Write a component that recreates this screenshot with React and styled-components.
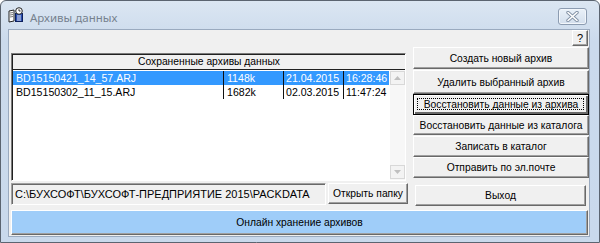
import React from 'react';
import styled, { createGlobalStyle, css } from 'styled-components';

const GlobalStyle = createGlobalStyle`
  html, body {
    margin: 0;
    padding: 0;
    background: #ffffff;
  }
  body {
    font-family: 'Liberation Sans', Arial, sans-serif;
    font-size: 10.3px;
    color: #000;
  }
`;

const Window = styled.div`
  width: 600px;
  height: 243px;
  box-sizing: border-box;
  border: 1px solid #5b6470;
  border-radius: 6px 6px 0 0;
  background: linear-gradient(#dbe6f2, #cbdaec 40px, #c9d9ec);
  display: flex;
  flex-direction: column;
  overflow: hidden;
`;

const TitleBar = styled.div`
  height: 28px;
  display: flex;
  align-items: center;
  padding-left: 7px;
  flex-shrink: 0;
`;

const Title = styled.span`
  margin-left: 6px;
  font-family: 'Noto Sans', 'DejaVu Sans', sans-serif;
  font-size: 11.5px;
  color: #76818e;
  margin-top: 4px;
`;

const CloseButton = styled.div`
  margin-left: auto;
  margin-right: 12px;
  margin-top: 2px;
  width: 27px;
  height: 15px;
  border: 1px solid #8c9cb1;
  border-radius: 3px;
  background: linear-gradient(#eaf1f9, #d3dfed);
  box-shadow: inset 0 0 0 1px #f2f6fb;
  display: flex;
  align-items: center;
  justify-content: center;
`;

const Client = styled.div`
  flex: 1;
  margin: 0 9px 6px 7px;
  border: 1px solid #9aaabf;
  background: #f0f0f0;
  padding: 0 1px 1px 2px;
  display: flex;
  flex-direction: column;
`;

const HelpRow = styled.div`
  display: flex;
  justify-content: flex-end;
`;

const raised = css`
  box-sizing: border-box;
  background: #f0f0f0;
  border: 1px solid;
  border-color: #ffffff #696969 #696969 #ffffff;
  box-shadow: inset -1px -1px 0 #a0a0a0;
`;

const HelpButton = styled.div`
  ${raised};
  width: 16px;
  height: 16px;
  display: flex;
  align-items: center;
  justify-content: center;
  font-size: 11px;
`;

const Main = styled.div`
  display: grid;
  grid-template-columns: 395px 176px;
  column-gap: 7px;
`;

const ListBox = styled.div`
  margin-top: 7px;
  height: 128px;
  box-sizing: border-box;
  border: 1px solid;
  border-color: #7a7a7a #ffffff #ffffff #7a7a7a;
  box-shadow: inset 1px 1px 0 #202020;
  background: #ffffff;
  display: flex;
  flex-direction: column;
`;

const ListHeader = styled.div`
  height: 14px;
  line-height: 13px;
  text-align: center;
  background: #f0f0f0;
  border-bottom: 1px solid #202020;
  margin-left: 1px;
  margin-top: 1px;
`;

const ListBody = styled.div`
  flex: 1;
  display: flex;
`;

const Rows = styled.div`
  flex: 1;
  padding: 1px 0 0 1px;
`;

const Row = styled.div`
  display: flex;
  height: 14px;
  line-height: 14px;
  font-size: 10.6px;
  background: ${p => (p.selected ? '#3399ff' : 'transparent')};
  color: ${p => (p.selected ? '#ffffff' : '#000000')};
  margin-right: 1px;
`;

const Cell = styled.div`
  width: ${p => p.w}px;
  box-sizing: border-box;
  padding-left: ${p => p.pad || 3}px;
  border-right: ${p => (p.last ? 'none' : '1px solid #101010')};
  white-space: nowrap;
  overflow: hidden;
`;

const ScrollBar = styled.div`
  width: 16px;
  display: flex;
  flex-direction: column;
  justify-content: space-between;
  background: #f7f7f7;
  padding: 1px 0;
`;

const ScrollArrow = styled.div`
  height: 14px;
  box-sizing: border-box;
  border: 1px solid #d8d8d8;
  background: #f3f3f3;
  display: flex;
  align-items: center;
  justify-content: center;
`;

const ButtonColumn = styled.div`
  display: flex;
  flex-direction: column;
  padding-top: 1px;
`;

const Button = styled.div`
  ${raised};
  height: ${p => p.h || 22}px;
  margin-top: ${p => p.mt || 0}px;
  display: flex;
  align-items: center;
  justify-content: center;
  white-space: nowrap;
  position: relative;
  ${p =>
    p.focused &&
    css`
      border-color: #000;
      box-shadow: inset 1px 1px 0 #fff, inset -2px -2px 0 #696969;
      &::after {
        content: '';
        position: absolute;
        left: 3px;
        top: 3px;
        right: 4px;
        bottom: 4px;
        border: 1px dotted #000;
      }
    `}
`;

const FooterRow = styled.div`
  display: grid;
  grid-template-columns: 315px 80px 176px;
  column-gap: 2px;
  margin-top: 2px;
  & > :last-child {
    margin-left: 5px;
  }
`;

const PathField = styled.div`
  height: 22px;
  box-sizing: border-box;
  border: 1px solid;
  border-color: #a0a0a0 #ffffff #ffffff #a0a0a0;
  box-shadow: inset 1px 1px 0 #696969;
  padding-left: 3px;
  display: flex;
  align-items: center;
  white-space: nowrap;
  overflow: hidden;
  font-size: 11px;
`;

const OnlineBar = styled.div`
  ${raised};
  margin-top: 4px;
  height: 25px;
  background: #9fcdf9;
  display: flex;
  align-items: center;
  justify-content: center;
`;

const AppIcon = () => (
  <svg width="16" height="16" viewBox="0 0 16 16">
    <path d="M1 4 L6 3 L6 14 L1 15 Z" fill="#fff" stroke="#222" strokeWidth="1" />
    <path d="M2 6 L5 5.5 M2 8 L5 7.5 M2 10 L5 9.5" stroke="#555" strokeWidth="0.8" />
    <rect x="7.5" y="6.5" width="7" height="8" fill="#2a4fb0" stroke="#0d1f5c" />
    <path d="M9 9 H13 M9 11 H13 M9 13 H13" stroke="#fff" strokeWidth="0.9" />
    <circle cx="11" cy="4" r="3.3" fill="#fff" stroke="#222" />
    <path d="M11 2.2 V4 H12.6" stroke="#222" strokeWidth="0.9" fill="none" />
  </svg>
);

const CloseIcon = () => (
  <svg width="13" height="11" viewBox="0 0 13 11">
    <path d="M2 1.5 L11 9.5 M11 1.5 L2 9.5" stroke="#8392a6" strokeWidth="3.4" strokeLinecap="round" />
    <path d="M2 1.5 L11 9.5 M11 1.5 L2 9.5" stroke="#ffffff" strokeWidth="1.6" strokeLinecap="round" />
  </svg>
);

const Arrow = ({ up }) => (
  <svg width="7" height="4" viewBox="0 0 7 4">
    <path d={up ? 'M0 4 L3.5 0 L7 4 Z' : 'M0 0 L3.5 4 L7 0 Z'} fill="#bfbfbf" />
  </svg>
);

const archives = [
  { name: 'BD15150421_14_57.ARJ', size: '1148k', date: '21.04.2015', time: '16:28:46' },
  { name: 'BD15150302_11_15.ARJ', size: '1682k', date: '02.03.2015', time: '11:47:24' },
];

const actions = [
  { label: 'Создать новый архив', h: 22 },
  { label: 'Удалить выбранный архив', h: 24, mt: 1 },
  { label: 'Восстановить данные из архива', h: 21, focused: true },
  { label: 'Восстановить данные из каталога', h: 20 },
  { label: 'Записать в каталог', h: 21, mt: 1 },
  { label: 'Отправить по эл.почте', h: 21 },
];

export default function App() {
  return (
    <>
      <GlobalStyle />
      <Window>
        <TitleBar>
          <AppIcon />
          <Title>Архивы данных</Title>
          <CloseButton>
            <CloseIcon />
          </CloseButton>
        </TitleBar>
        <Client>
          <HelpRow>
            <HelpButton>?</HelpButton>
          </HelpRow>
          <Main>
            <ListBox>
              <ListHeader>Сохраненные архивы данных</ListHeader>
              <ListBody>
                <Rows>
                  {archives.map((a, i) => (
                    <Row key={a.name} selected={i === 0}>
                      <Cell w={211}>{a.name}</Cell>
                      <Cell w={60}>{a.size}</Cell>
                      <Cell w={60} pad={2}>{a.date}</Cell>
                      <Cell w={45} pad={2} last>{a.time}</Cell>
                    </Row>
                  ))}
                </Rows>
                <ScrollBar>
                  <ScrollArrow><Arrow up /></ScrollArrow>
                  <ScrollArrow><Arrow /></ScrollArrow>
                </ScrollBar>
              </ListBody>
            </ListBox>
            <ButtonColumn>
              {actions.map(b => (
                <Button key={b.label} h={b.h} mt={b.mt} focused={b.focused}>
                  {b.label}
                </Button>
              ))}
            </ButtonColumn>
          </Main>
          <FooterRow>
            <PathField>C:\БУХСОФТ\БУХСОФТ-ПРЕДПРИЯТИЕ 2015\PACKDATA</PathField>
            <Button h={21}>Открыть папку</Button>
            <Button h={21} mt={2}>Выход</Button>
          </FooterRow>
          <OnlineBar>Онлайн хранение архивов</OnlineBar>
        </Client>
      </Window>
    </>
  );
}
